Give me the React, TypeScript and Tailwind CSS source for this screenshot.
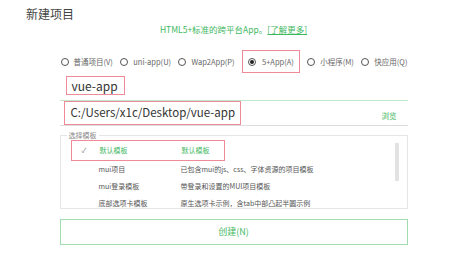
const font = { fontFamily: '"Noto Sans CJK SC", "Noto Sans", sans-serif' };

const types = [
  { label: "普通项目(V)" },
  { label: "uni-app(U)" },
  { label: "Wap2App(P)" },
  { label: "5+App(A)", checked: true },
  { label: "小程序(M)" },
  { label: "快应用(Q)" },
];

const templates = [
  ["默认模板", "默认模板"],
  ["mui项目", "已包含mui的js、css、字体资源的项目模板"],
  ["mui登录模板", "带登录和设置的MUI项目模板"],
  ["底部选项卡模板", "原生选项卡示例，含tab中部凸起半圆示例"],
];

function Radio({ checked }: { checked?: boolean }) {
  return (
    <span className="flex h-[8px] w-[8px] shrink-0 items-center justify-center rounded-full border border-[#555]">
      {checked && <span className="h-[4px] w-[4px] rounded-full bg-[#222]" />}
    </span>
  );
}

export default function App() {
  return (
    <div className="h-[254px] w-[467px] overflow-hidden bg-white text-[#555]" style={font}>
      <div className="pl-[26px] pt-[6px] text-[12px] leading-[16px] text-[#444]">新建项目</div>
      <div className="mt-[2px] text-center text-[8.5px] leading-[10px] text-[#3fb85f]">
        HTML5+标准的跨平台App。<span className="underline">[了解更多]</span>
      </div>

      <div className="mx-auto w-[348px]">
        <div className="mt-[16px] flex h-[23px] items-center justify-between whitespace-nowrap pl-[1px] text-[7.5px] text-[#666]">
          {types.map((t) =>
            t.checked ? (
              <div
                key={t.label}
                className="flex h-[23px] items-center gap-[6px] border border-[#f08a99] px-[5px]"
              >
                <Radio checked />
                <span>{t.label}</span>
              </div>
            ) : (
              <div key={t.label} className="flex items-center gap-[5px]">
                <Radio />
                <span>{t.label}</span>
              </div>
            )
          )}
        </div>

        <div className="ml-[6px] mt-[3px] flex h-[19px] w-[59px] items-center border border-[#f08a99] pl-[5px] text-[12px] text-[#333]">
          vue-app
        </div>

        <div className="mt-[5px] flex h-[26px] items-center justify-between border-y border-t-[#bfe8c9] border-b-[#ddd]">
          <div className="ml-[4px] flex h-[24px] w-[177px] items-center whitespace-nowrap border border-[#f08a99] pl-[6px] text-[11.5px] text-[#333]">
            C:/Users/x1c/Desktop/vue-app
          </div>
          <span className="mr-[11px] mt-[6px] text-[7.5px] text-[#45b85f]">浏览</span>
        </div>

        <div className="relative mt-[9px] h-[74px] border border-[#e6e6e6]">
          <span className="absolute left-[6px] top-[-6px] bg-white px-[2px] text-[7px] leading-[10px] text-[#888]">
            选择模板
          </span>
          <div className="absolute right-[8px] top-[7px] h-[38px] w-[4px] bg-[#e2e2e2]" />
          <div className="pl-[10px] pt-[4px] text-[7px]">
            {templates.map(([a, b], i) =>
              i === 0 ? (
                <div
                  key={a}
                  className="flex h-[21px] w-[154px] items-center border border-[#f08a99] text-[#3fb85f]"
                >
                  <span className="w-[28px] pl-[10px] text-[7px] text-[#888]">✓</span>
                  <span className="w-[82px]">{a}</span>
                  <span>{b}</span>
                </div>
              ) : (
                <div key={a} className="flex h-[17px] items-center text-[#555]">
                  <span className="w-[28px]" />
                  <span className="w-[82px]">{a}</span>
                  <span>{b}</span>
                </div>
              )
            )}
          </div>
        </div>

        <div className="mt-[10px] flex h-[26px] items-center justify-center border border-[#9fdcae] text-[9px] text-[#3fb85f]">
          创建(N)
        </div>
      </div>
    </div>
  );
}
